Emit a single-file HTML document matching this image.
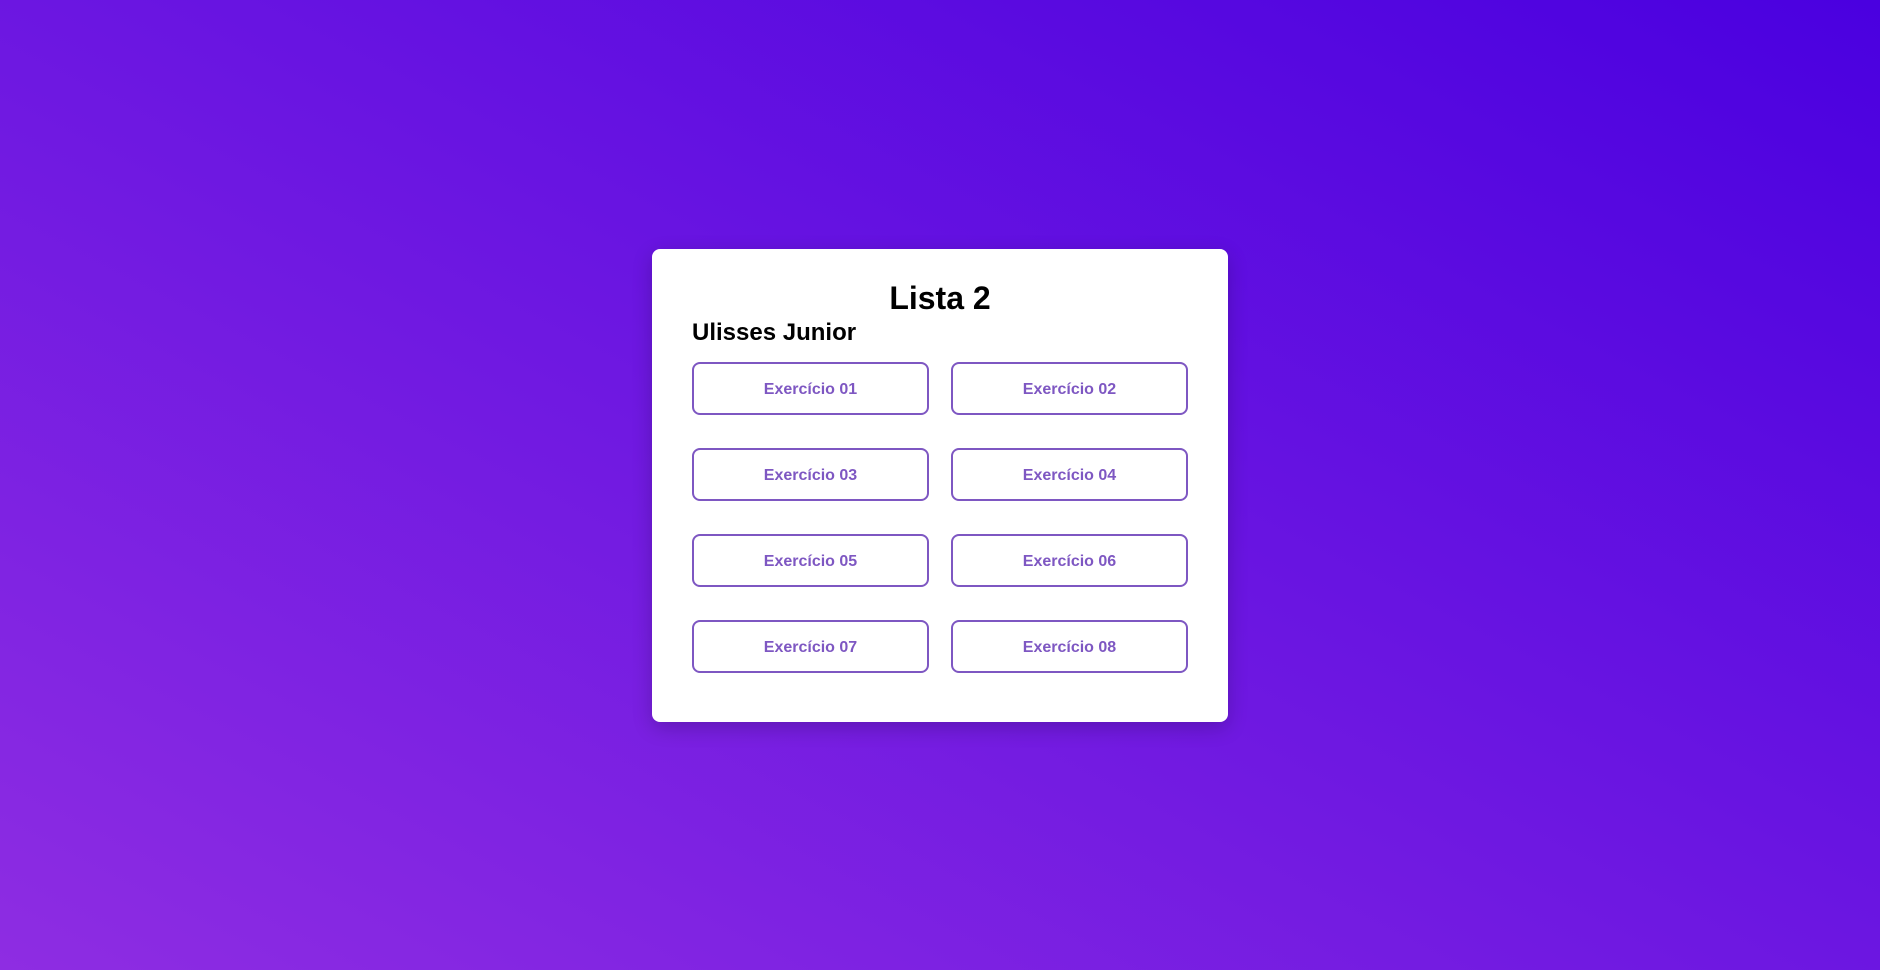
<!DOCTYPE html>
<html><head><meta charset="utf-8"><style>
html,body{margin:0;padding:0;width:1880px;height:970px;overflow:hidden}
body{background:linear-gradient(to top right,#8e2de2,#4a00e0);font-family:"Liberation Sans",Arial,sans-serif;position:relative}
.card{position:absolute;left:652px;top:249px;width:576px;height:473px;background:#fff;border-radius:8px;box-shadow:0 6px 20px rgba(0,0,0,0.2)}
h1{position:absolute;left:0;right:0;top:280px;margin:0;text-align:center;font-size:32px;line-height:37px;font-weight:bold;color:#000}
h2{position:absolute;left:692px;top:319px;margin:0;font-size:24px;line-height:28px;font-weight:bold;color:#000}
.b{position:absolute;width:233px;height:49px;border:2px solid #7e57c2;border-radius:8px;box-sizing:content-box;color:#7e57c2;font-weight:bold;font-size:16px;line-height:51px;text-align:center;background:#fff}
</style></head><body>
<div class="card"></div>
<h1>Lista 2</h1>
<h2>Ulisses Junior</h2>
<div class="b" style="left:692px;top:362px">Exercício 01</div>
<div class="b" style="left:951px;top:362px">Exercício 02</div>
<div class="b" style="left:692px;top:448px">Exercício 03</div>
<div class="b" style="left:951px;top:448px">Exercício 04</div>
<div class="b" style="left:692px;top:534px">Exercício 05</div>
<div class="b" style="left:951px;top:534px">Exercício 06</div>
<div class="b" style="left:692px;top:620px">Exercício 07</div>
<div class="b" style="left:951px;top:620px">Exercício 08</div>
</body></html>
